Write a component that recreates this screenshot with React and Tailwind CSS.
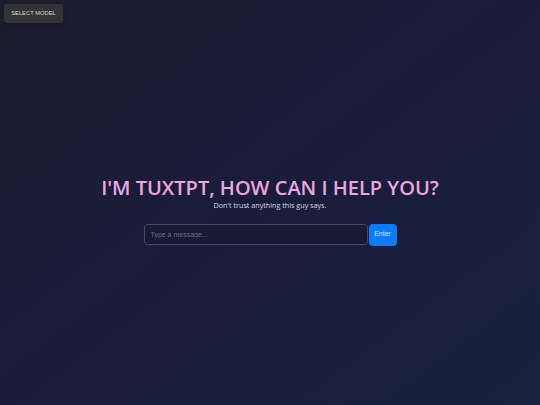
import { useState } from "react"

export default function App() {
    const [message, setMessage] = useState("")

    return (
        <div className="relative w-full h-screen overflow-hidden bg-gradient-to-br from-[#1c1c30] via-[#1a1d3a] to-[#18203f]" style={{ fontFamily: '"Open Sans", "DejaVu Sans", sans-serif' }}>
            <button
                className="absolute top-[4px] left-[4px] w-[59px] h-[19px] rounded-[3px] bg-[#333335] text-[#d8d8d8] text-[5.8px] shadow-md"
                style={{ fontFamily: '"Liberation Sans", Arial, sans-serif' }}
            >
                SELECT MODEL
            </button>

            <div className="flex flex-col items-center justify-center h-full pt-[14px]">
                <h1 className="text-[20px] leading-[27px] font-semibold text-[#eba8e0]">
                    I'M TUXTPT, HOW CAN I HELP YOU?
                </h1>
                <p className="text-[7.2px] leading-[8px] text-[#d6d8e6]">Don't trust anything this guy says.</p>

                <form className="flex items-stretch mt-[15px] gap-[1px]" onSubmit={(e) => e.preventDefault()}>
                    <input
                        autoFocus
                        value={message}
                        onChange={(e) => setMessage(e.target.value)}
                        placeholder="Type a message..."
                        className="w-[224px] h-[21px] px-[6px] rounded-[4px] border border-[#444863] bg-[#161a33] text-[7px] text-[#ccc] placeholder:text-[#6b6f88] outline-none"
                        style={{ fontFamily: '"Liberation Sans", Arial, sans-serif' }}
                    />
                    <button
                        type="submit"
                        className="w-[28px] h-[22px] rounded-[4px] bg-[#0a7cff] text-[#d9e8ff] text-[7px]"
                        style={{ fontFamily: '"Liberation Sans", Arial, sans-serif' }}
                    >
                        Enter
                    </button>
                </form>
            </div>
        </div>
    )
}
